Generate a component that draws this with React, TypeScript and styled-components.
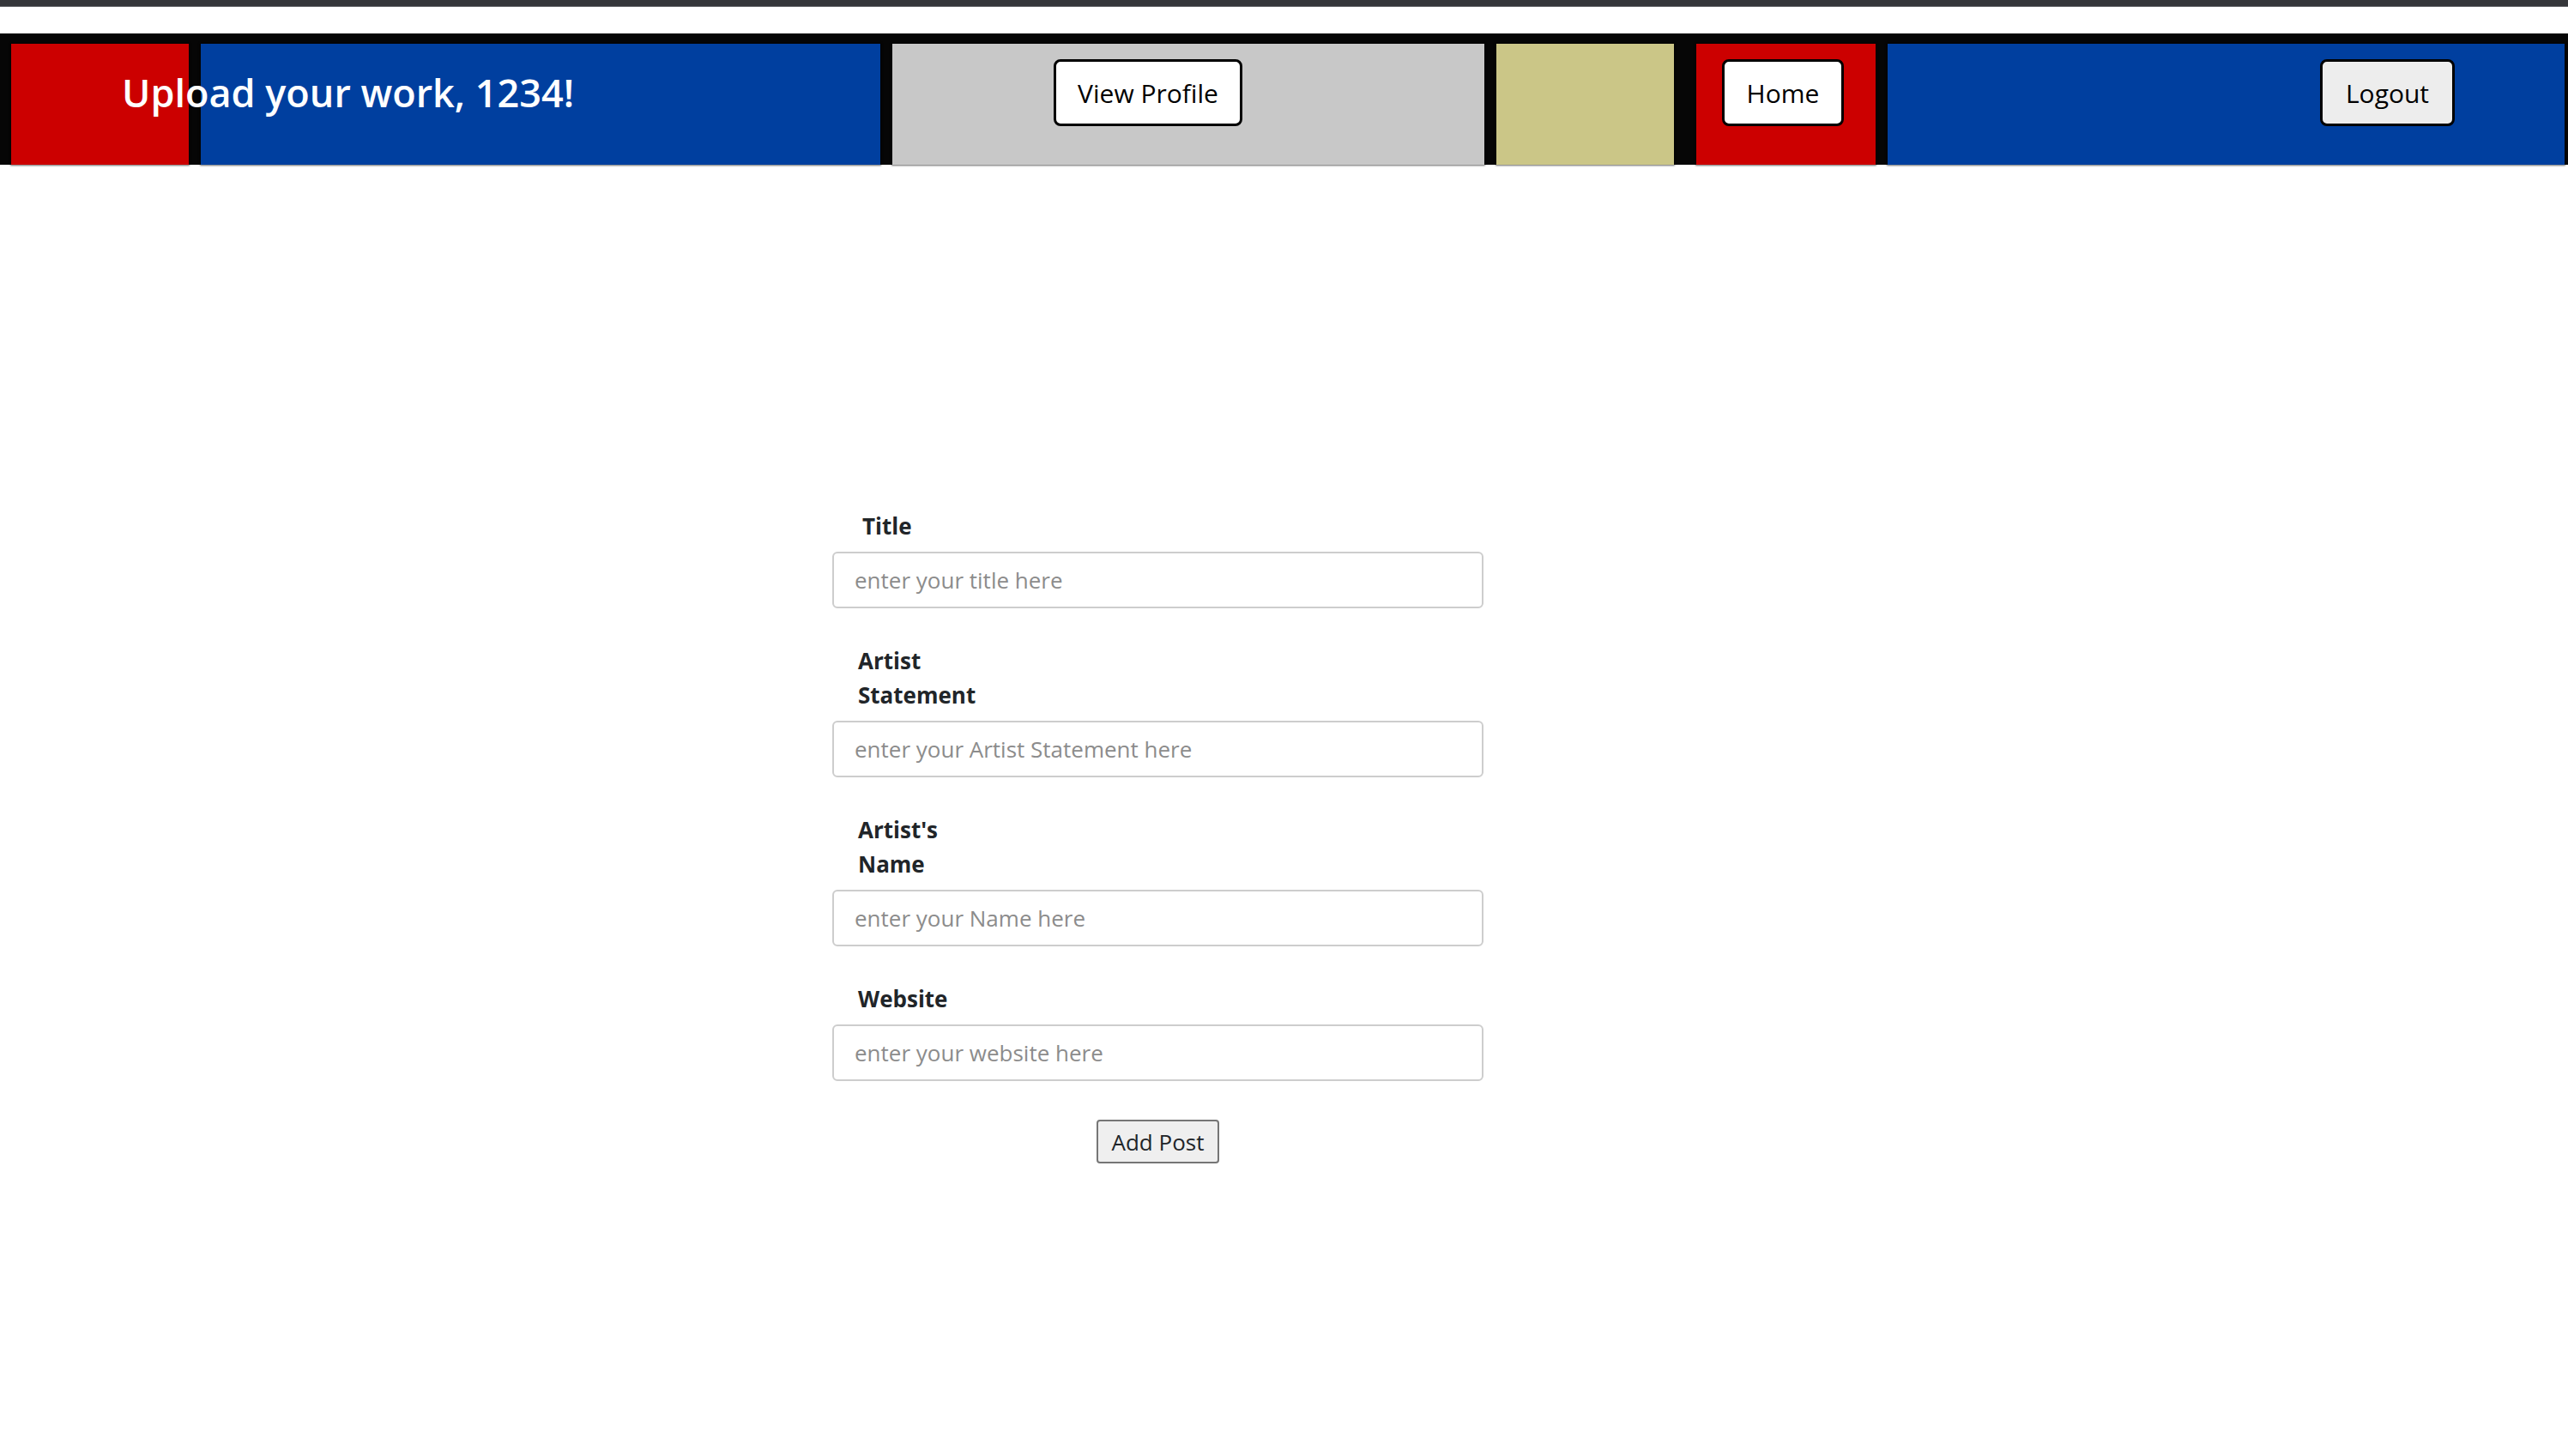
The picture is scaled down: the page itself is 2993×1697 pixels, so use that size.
import React from 'react';
import styled, { createGlobalStyle } from 'styled-components';

const GlobalStyle = createGlobalStyle`
  body {
    margin: 0;
    background: #ffffff;
    font-family: 'Open Sans', 'Noto Sans', Arial, sans-serif;
    color: #212529;
  }
`;

type BlockSpec = {
  color: string;
  width?: number;
  gapAfter?: number;
  padLeft?: number;
  padRight?: number;
  justify?: 'flex-start' | 'flex-end';
  button?: { label: string; width: number; light?: boolean };
};

const blocks: BlockSpec[] = [
  { color: '#cc0000', width: 207 },
  { color: '#003f9f', width: 792 },
  {
    color: '#c8c8c8',
    width: 690,
    padLeft: 188,
    button: { label: 'View Profile', width: 220 },
  },
  { color: '#cbc687', width: 207, gapAfter: 26 },
  {
    color: '#cc0000',
    width: 209,
    padLeft: 30,
    button: { label: 'Home', width: 142 },
  },
  {
    color: '#003f9f',
    padRight: 128,
    justify: 'flex-end',
    button: { label: 'Logout', width: 157, light: true },
  },
];

const fields = [
  { label: 'Title', placeholder: 'enter your title here', indent: 35 },
  {
    label: 'Artist Statement',
    placeholder: 'enter your Artist Statement here',
    indent: 30,
  },
  { label: "Artist's Name", placeholder: 'enter your Name here', indent: 30 },
  { label: 'Website', placeholder: 'enter your website here', indent: 30 },
];

export default function App() {
  return (
    <React.Fragment>
      <GlobalStyle />
      <TopStrip />
      <Header>
        <Greeting>Upload your work, 1234!</Greeting>
        {blocks.map((block, index) => (
          <Block
            key={index}
            $color={block.color}
            $width={block.width}
            $gapAfter={block.gapAfter ?? 14}
            $padLeft={block.padLeft ?? 0}
            $padRight={block.padRight ?? 0}
            $justify={block.justify ?? 'flex-start'}
          >
            {block.button && (
              <NavButton
                $width={block.button.width}
                $light={block.button.light}
              >
                {block.button.label}
              </NavButton>
            )}
          </Block>
        ))}
      </Header>
      <Main>
        <Form onSubmit={(e) => e.preventDefault()}>
          {fields.map((field) => (
            <Field key={field.label}>
              <Label $indent={field.indent}>{field.label}</Label>
              <Input type="text" placeholder={field.placeholder} />
            </Field>
          ))}
          <SubmitButton type="submit">Add Post</SubmitButton>
        </Form>
      </Main>
    </React.Fragment>
  );
}

const TopStrip = styled.div`
  height: 7px;
  background: #35363a;
  border-bottom: 1px solid #5b5c60;
`;

const Header = styled.header`
  position: relative;
  margin-top: 31px;
  display: flex;
  padding: 12px 4px 0 13px;
  background: #060606;
`;

const Greeting = styled.h1`
  position: absolute;
  top: 30px;
  left: 142px;
  margin: 0;
  font-size: 45px;
  line-height: 78px;
  font-weight: 600;
  color: #ffffff;
  white-space: nowrap;
  z-index: 1;
`;

type BlockProps = {
  $color: string;
  $width?: number;
  $gapAfter: number;
  $padLeft: number;
  $padRight: number;
  $justify: 'flex-start' | 'flex-end';
};

const Block = styled.div<BlockProps>`
  box-sizing: border-box;
  height: 141px;
  flex: ${({ $width }) => ($width ? `0 0 ${$width}px` : '1 1 auto')};
  margin-right: ${({ $width, $gapAfter }) => ($width ? $gapAfter : 0)}px;
  display: flex;
  align-items: flex-start;
  justify-content: ${({ $justify }) => $justify};
  padding: 18px ${({ $padRight }) => $padRight}px 0
    ${({ $padLeft }) => $padLeft}px;
  background: ${({ $color }) => $color};
  box-shadow: 0 0 2px 1px rgba(0, 0, 0, 0.6);
`;

const NavButton = styled.button<{ $width: number; $light?: boolean }>`
  box-sizing: border-box;
  width: ${({ $width }) => $width}px;
  height: 78px;
  padding: 0;
  border: 3px solid #000000;
  border-radius: 8px;
  background: ${({ $light }) => ($light ? '#ededed' : '#ffffff')};
  font-family: inherit;
  font-size: 30px;
  color: #000000;
  cursor: pointer;
`;

const Main = styled.main`
  display: flex;
  padding: 401px 0 120px 970px;
`;

const Form = styled.form`
  width: 759px;
  display: flex;
  flex-direction: column;
  gap: 41px;
`;

const Field = styled.div`
  display: flex;
  flex-direction: column;
  gap: 10px;
`;

const Label = styled.label<{ $indent: number }>`
  width: 170px;
  padding-left: ${({ $indent }) => $indent}px;
  font-size: 26px;
  line-height: 40px;
  font-weight: 700;
  color: #212529;
`;

const Input = styled.input`
  box-sizing: border-box;
  width: 100%;
  height: 66px;
  padding: 0 24px;
  border: 2px solid #cdcdcd;
  border-radius: 6px;
  font-family: inherit;
  font-size: 26px;
  color: #212529;
  outline: none;

  &::placeholder {
    color: #8c8c8c;
  }
`;

const SubmitButton = styled.button`
  box-sizing: border-box;
  align-self: center;
  width: 143px;
  height: 51px;
  margin-top: 4px;
  padding: 0;
  border: 2px solid #767676;
  border-radius: 4px;
  background: #efefef;
  font-family: inherit;
  font-size: 26px;
  color: #212529;
  cursor: pointer;
`;
